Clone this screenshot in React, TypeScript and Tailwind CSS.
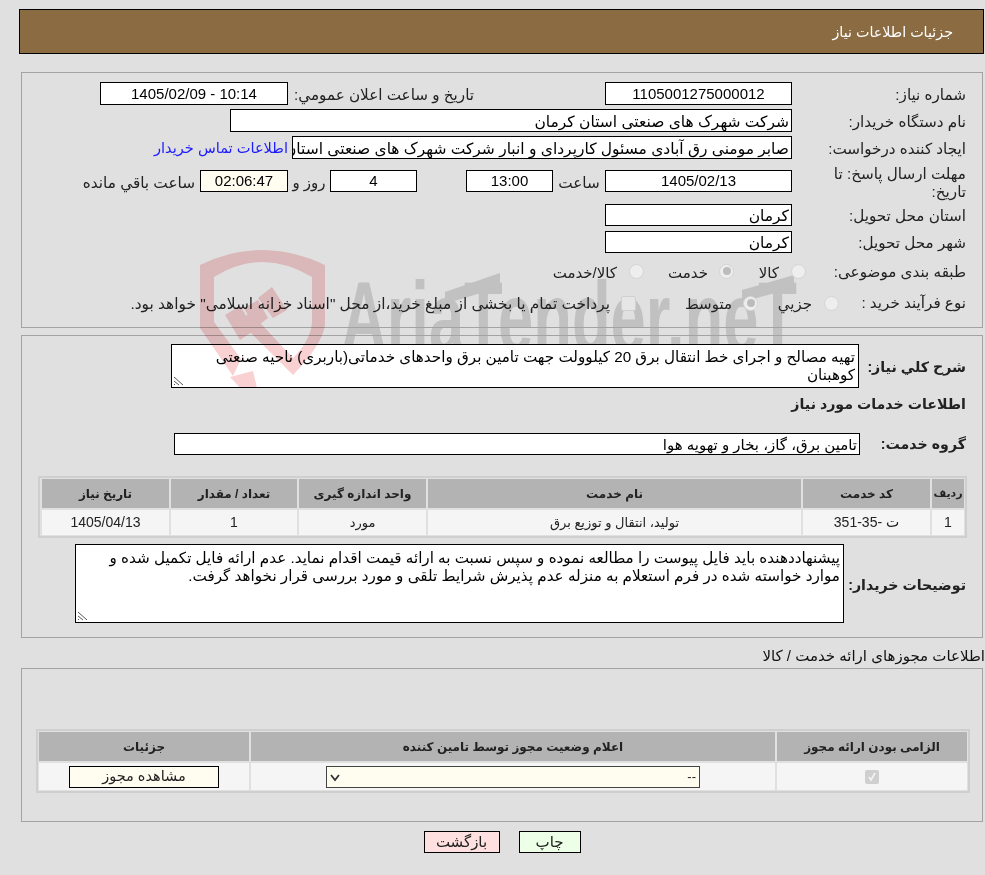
const font = { fontFamily: '"Liberation Sans", "DejaVu Sans", sans-serif' };

const field = 'border border-black bg-white h-[23px] text-[15px] leading-[21px] text-black overflow-hidden whitespace-nowrap shrink-0';
const fieldSm = 'border border-black bg-white h-[22px] text-[15px] leading-[20px] text-black overflow-hidden whitespace-nowrap shrink-0';

function Label({ children, bold }: { children: React.ReactNode; bold?: boolean }) {
  return <span className={bold ? 'font-bold text-[14.2px] text-[#222]' : 'text-[15.2px] text-[#222]'}>{children}</span>;
}

function Radio({ checked }: { checked?: boolean }) {
  return (
    <span className="w-[15px] h-[15px] rounded-full bg-[#eeeeee] border border-[#d4d4d4] flex items-center justify-center shrink-0">
      {checked && <span className="w-[8px] h-[8px] rounded-full bg-[#bcbcbc]" />}
    </span>
  );
}

function Resize() {
  return (
    <svg className="absolute left-[1px] bottom-[1px]" width="11" height="11" viewBox="0 0 11 11">
      <path d="M1 2 L10 10 M1 6 L6 10 M1 9 L2 10" stroke="#555" strokeWidth="1" />
    </svg>
  );
}

// gray brand text sits behind the form
function WatermarkText() {
  return (
    <svg dir="ltr" className="absolute left-0 top-0 pointer-events-none" width="985" height="400" viewBox="0 0 985 400">
      <defs>
        <clipPath id="wm"><rect x="0" y="240" width="985" height="104" /></clipPath>
      </defs>
      <g clipPath="url(#wm)">
        <text x="341" y="352" direction="ltr" fontFamily="Liberation Sans, sans-serif" fontWeight="700" fontSize="100" fill="#c1c1c1" textLength="456" lengthAdjust="spacingAndGlyphs">AriaTender.neT</text>
        <path d="M742 290 L794 275 L794 288 L742 302 Z" fill="#c1c1c1" />
        <path d="M445 292 L500 273 L500 287 L445 304 Z" fill="#c1c1c1" />
      </g>
    </svg>
  );
}

// shield shows through the white textarea, so it is multiplied on top
function WatermarkShield() {
  return (
    <svg className="absolute left-0 top-0 pointer-events-none mix-blend-multiply" width="985" height="400" viewBox="0 0 985 400">
      <defs>
        <clipPath id="sh"><rect x="190" y="240" width="150" height="147" /></clipPath>
      </defs>
      <g clipPath="url(#sh)" fill="#f9d1d2">
        <path d="M233 376 L200 328 L200 265 Q262 235 325 265 L325 325 Q322 345 293 375 L240 322 L250 312 L293 358 Q311 340 312 322 L312 277 Q262 247 214 277 L214 322 L241 359 Z" />
        <path d="M230 377 L253 371 L258 392 L244 392 Z" />
        <path d="M225 315 L240 306 L255 330 L240 340 Z" />
        <path d="M244 308 L258 300 L268 318 L255 328 Z" />
        <path d="M258 298 L272 287 L287 310 L273 318 Z" />
      </g>
    </svg>
  );
}

export default function App() {
  return (
    <div dir="rtl" className="relative w-[985px] h-[875px] bg-[#e0e0e0] overflow-hidden text-[15px] text-[#222]" style={font}>
      <WatermarkText />
      <div className="relative">
        <div className="pt-[9px] mr-[1px]">
          <div className="ml-[19px] h-[45px] bg-[#8b6b41] border border-black flex items-center pr-[30px] pt-[3px] text-white text-[14.3px]">جزئیات اطلاعات نیاز</div>
        </div>

        <div className="mt-[18px] mr-[2px] ml-[21px] h-[256px] border border-[#a3a3a3] flex flex-col pt-[9px]">
          <div className="flex h-[23px] items-center">
            <div className="w-[190px] pr-[16px] pt-[3px] shrink-0"><Label>شماره نیاز:</Label></div>
            <div className={`${field} w-[187px] text-center`}>1105001275000012</div>
            <div className="w-[131px] shrink-0" />
            <div className="w-[186px] shrink-0 pt-[3px] whitespace-nowrap"><Label>تاریخ و ساعت اعلان عمومي:</Label></div>
            <div dir="ltr" className={`${field} w-[188px] text-center`}>1405/02/09 - 10:14</div>
          </div>
          <div className="flex h-[23px] items-center mt-[4px]">
            <div className="w-[190px] pr-[16px] pt-[3px] shrink-0"><Label>نام دستگاه خریدار:</Label></div>
            <div className={`${field} w-[562px] pr-[2px] pt-[1px] !text-[15.5px]`}>شرکت شهرک های صنعتی استان کرمان</div>
          </div>
          <div className="flex h-[23px] items-center mt-[4px]">
            <div className="w-[190px] pr-[16px] pt-[3px] shrink-0"><Label>ایجاد کننده درخواست:</Label></div>
            <div className={`${field} w-[500px] pr-[2px] pt-[1px] !text-[15.5px]`}>صابر مومنی رق آبادی مسئول کارپردای و انبار شرکت شهرک های صنعتی استان کرمان</div>
            <span className="mr-[4px] pt-[3px] text-[#1a1aff] text-[14.6px] whitespace-nowrap">اطلاعات تماس خریدار</span>
          </div>
          <div className="flex h-[36px] mt-[5px]">
            <div className="w-[190px] pr-[16px] pl-[30px] pt-[1px] leading-[18px] shrink-0"><Label>مهلت ارسال پاسخ: تا تاریخ:</Label></div>
            <div className="flex items-start mt-[6px]">
              <div className={`${fieldSm} w-[187px] text-center`}>1405/02/13</div>
              <span className="w-[52px] pt-[2px] text-center text-[15.2px]">ساعت</span>
              <div className={`${fieldSm} w-[87px] text-center`}>13:00</div>
              <span className="w-[49px]" />
              <div className={`${fieldSm} w-[87px] text-center`}>4</div>
              <span className="w-[42px] pt-[2px] text-center text-[15px]">روز و</span>
              <div className={`${fieldSm} w-[88px] text-center !bg-[#fffdf0]`}>02:06:47</div>
              <span className="mr-[5px] pt-[2px] text-[15.3px] whitespace-nowrap">ساعت باقي مانده</span>
            </div>
          </div>
          <div className="flex h-[22px] items-center mt-[4px]">
            <div className="w-[190px] pr-[16px] pt-[3px] shrink-0"><Label>استان محل تحویل:</Label></div>
            <div className={`${fieldSm} w-[187px] pr-[2px] pt-[1px] !text-[15.5px]`}>کرمان</div>
          </div>
          <div className="flex h-[22px] items-center mt-[5px]">
            <div className="w-[190px] pr-[16px] pt-[3px] shrink-0"><Label>شهر محل تحویل:</Label></div>
            <div className={`${fieldSm} w-[187px] pr-[2px] pt-[1px] !text-[15.5px]`}>کرمان</div>
          </div>
          <div className="flex h-[22px] items-center mt-[7px]">
            <div className="w-[176px] pr-[16px] pt-[2px] shrink-0 whitespace-nowrap"><Label>طبقه بندی موضوعی:</Label></div>
            <div className="flex items-center">
              <Radio />
              <span className="mr-[12px] w-[45px] pt-[5px]">کالا</span>
              <Radio checked />
              <span className="mr-[11px] w-[64px] pt-[5px]">خدمت</span>
              <Radio />
              <span className="mr-[12px] pt-[5px]">کالا/خدمت</span>
            </div>
          </div>
          <div className="flex h-[22px] items-center mt-[10px]">
            <div className="w-[143px] pr-[16px] shrink-0 whitespace-nowrap"><Label>نوع فرآیند خرید :</Label></div>
            <div className="flex items-center">
              <Radio />
              <span className="mr-[12px] w-[54px] pt-[3px]">جزیي</span>
              <Radio checked />
              <span className="mr-[11px] w-[96px] pt-[3px]">متوسط</span>
              <span className="w-[15px] h-[15px] rounded-[2px] bg-[#e6e6e6] border border-[#d0d0d0] shrink-0" />
              <span className="mr-[11px] pt-[1px] text-[15.4px] whitespace-nowrap">پرداخت تمام یا بخشی از مبلغ خرید،از محل "اسناد خزانه اسلامی" خواهد بود.</span>
            </div>
          </div>
        </div>

        <div className="mt-[7px] mr-[2px] ml-[21px] h-[303px] border border-[#a3a3a3]">
          <div className="flex mt-[8px]">
            <div className="w-[123px] pr-[16px] pt-[12px] shrink-0 whitespace-nowrap"><Label bold>شرح کلي نیاز:</Label></div>
            <div className="relative border border-black bg-white w-[688px] h-[44px] pr-[3px] pt-[3px] text-[15.2px] leading-[18px] text-black">
              تهیه مصالح و اجرای خط انتقال برق 20 کیلوولت جهت تامین برق واحدهای خدماتی(باربری) ناحیه صنعتی کوهبنان
              <Resize />
            </div>
          </div>
          <div className="pr-[16px] mt-[5px] h-[22px] leading-[22px]"><Label bold>اطلاعات خدمات مورد نیاز</Label></div>
          <div className="flex items-center mt-[18px] h-[22px]">
            <div className="w-[122px] pr-[16px] shrink-0"><Label bold>گروه خدمت:</Label></div>
            <div className={`${fieldSm} w-[686px] pr-[2px] pt-[1px]`}>تامین برق، گاز، بخار و تهویه هوا</div>
          </div>
          <div className="mt-[21px] mr-[15px] ml-[16px] border-2 border-[#cfcfcf] p-[1px] grid grid-cols-[32px_127px_373px_127px_126px_127px] gap-[2px]">
            {['ردیف', 'کد خدمت', 'نام خدمت', 'واحد اندازه گیری', 'تعداد / مقدار', 'تاریخ نیاز'].map((h) => (
              <div key={h} className="bg-[#b3b3b3] h-[29px] flex items-center justify-center font-bold text-[12px] text-[#222] whitespace-nowrap">{h === 'ردیف' ? <span className="text-[11px]">{h}</span> : h}</div>
            ))}
            <div className="bg-[#f5f5f5] h-[25px] flex items-center justify-center text-[14px]">1</div>
            <div className="bg-[#f5f5f5] h-[25px] flex items-center justify-center text-[14px]">ت -35-351</div>
            <div className="bg-[#f5f5f5] h-[25px] flex items-center justify-center text-[13px]">تولید، انتقال و توزیع برق</div>
            <div className="bg-[#f5f5f5] h-[25px] flex items-center justify-center text-[13px]">مورد</div>
            <div className="bg-[#f5f5f5] h-[25px] flex items-center justify-center text-[14px]">1</div>
            <div className="bg-[#f5f5f5] h-[25px] flex items-center justify-center text-[14px]">1405/04/13</div>
          </div>
          <div className="flex mt-[6px]">
            <div className="w-[138px] pr-[16px] pt-[30px] shrink-0 whitespace-nowrap"><Label bold>توضیحات خریدار:</Label></div>
            <div className="relative border border-black bg-white w-[769px] h-[79px] pr-[3px] pt-[4px] text-[15.2px] leading-[18px] text-black">
              پیشنهاددهنده باید فایل پیوست را مطالعه نموده و سپس نسبت به ارائه قیمت اقدام نماید. عدم ارائه فایل تکمیل شده و موارد خواسته شده در فرم استعلام به منزله عدم پذیرش شرایط تلقی و مورد بررسی قرار نخواهد گرفت.
              <Resize />
            </div>
          </div>
        </div>

        <div className="mt-[7px] h-[20px] text-[15px] text-[#111] whitespace-nowrap">اطلاعات مجوزهای ارائه خدمت / کالا</div>

        <div className="mt-[3px] mr-[2px] ml-[21px] h-[154px] border border-[#a3a3a3] pt-[60px]">
          <div className="mr-[12px] ml-[14px] border-2 border-[#cfcfcf] p-[1px] grid grid-cols-[190px_524px_1fr] gap-[2px]">
            {['الزامی بودن ارائه مجوز', 'اعلام وضعیت مجوز توسط تامین کننده', 'جزئیات'].map((h) => (
              <div key={h} className="bg-[#b3b3b3] h-[29px] flex items-center justify-center font-bold text-[12px] text-[#222] whitespace-nowrap">{h}</div>
            ))}
            <div className="bg-[#f5f5f5] h-[27px] flex items-center justify-center">
              <span className="w-[14px] h-[14px] rounded-[2px] bg-[#cfcfcf] flex items-center justify-center">
                <svg width="10" height="10" viewBox="0 0 10 10"><path d="M2 5 L4 8 L8 1" fill="none" stroke="#f5f5f5" strokeWidth="1.6" /></svg>
              </span>
            </div>
            <div className="bg-[#f5f5f5] h-[27px] flex items-center justify-center">
              <div className="w-[374px] h-[22px] border border-[#444] bg-[#fffdf0] flex items-center justify-between px-[3px] text-[13px]">
                <span>--</span>
                <svg width="10" height="10" viewBox="0 0 10 10"><path d="M1 3 L5 8 L9 3" fill="none" stroke="#333" strokeWidth="1.8" /></svg>
              </div>
            </div>
            <div className="bg-[#f5f5f5] h-[27px] flex items-center justify-center">
              <div className="w-[150px] h-[22px] border border-black bg-[#fffdf0] flex items-center justify-center text-[14.5px]">مشاهده مجوز</div>
            </div>
          </div>
        </div>

        <div dir="ltr" className="flex justify-center gap-[19px] mt-[9px] pl-[19px]">
          <div className="w-[76px] h-[22px] border border-black bg-[#ffe0e0] flex items-center justify-center text-[15px]">بازگشت</div>
          <div className="w-[62px] h-[22px] border border-black bg-[#eeffe8] flex items-center justify-center text-[15px]">چاپ</div>
        </div>
      </div>
      <WatermarkShield />
    </div>
  );
}
